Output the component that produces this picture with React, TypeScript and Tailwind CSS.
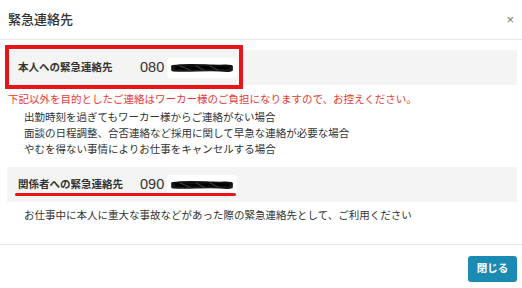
import React from 'react';

const Scribble = () => (
  <span className="inline-flex items-center bg-white rounded-[3px] px-[3px] h-[20px] ml-[3px]">
    <svg width="64" height="12" viewBox="0 0 64 12">
      <g fill="none" strokeLinecap="round" style={{ filter: 'blur(0.4px)' }}>
        <path d="M3 5 C 14 3, 28 4, 42 4.5 S 56 4, 61 5" stroke="#111" strokeWidth="4" />
        <path d="M3 7.5 C 18 8.5, 36 6.5, 50 7.5 S 58 7.5, 61 7.5" stroke="#1a1a1a" strokeWidth="4" />
        <path d="M6 6 C 20 7, 40 5, 58 6" stroke="#000" strokeWidth="3" />
        <path d="M10 4 L 20 8 M 26 4 L 34 8 M 40 4 L 48 8" stroke="#444" strokeWidth="1" />
      </g>
    </svg>
  </span>
);

const ContactRow = ({ label, number }: { label: string; number: string }) => (
  <div className="ml-[7px] mr-[5px] h-[35px] bg-[#f4f4f4] flex items-center pl-[11px]">
    <span className="w-[122px] text-[10.5px] font-bold text-[#333]">{label}</span>
    <span className="text-[14.5px] text-[#333] leading-none">{number}</span>
    <Scribble />
  </div>
);

export default function App() {
  return (
    <div
      className="relative w-[522px] h-[288px] bg-white overflow-hidden"
      style={{ fontFamily: '"Liberation Sans", "Noto Sans CJK JP", sans-serif' }}
    >
      {/* header */}
      <div className="h-[40px] flex items-center justify-between pl-[8px] pr-[8px] border-b border-[#e6e6e6]">
        <h2 className="text-[13px] font-medium text-[#333] leading-none">緊急連絡先</h2>
        <span className="text-[13px] text-[#777] leading-none">×</span>
      </div>

      {/* body */}
      <div className="pt-[10px]">
        <ContactRow label="本人への緊急連絡先" number="080" />

        <p className="mt-[7px] px-[8px] text-[10.5px] leading-[14px] text-[#e53935]">
          下記以外を目的としたご連絡はワーカー様のご負担になりますので、お控えください。
        </p>
        <ul className="mt-[3px] pl-[24px] text-[10.5px] leading-[16px] text-[#333]">
          <li>出勤時刻を過ぎてもワーカー様からご連絡がない場合</li>
          <li>面談の日程調整、合否連絡など採用に関して早急な連絡が必要な場合</li>
          <li>やむを得ない事情によりお仕事をキャンセルする場合</li>
        </ul>

        <div className="mt-[10px]">
          <ContactRow label="関係者への緊急連絡先" number="090" />
        </div>

        <p className="mt-[5px] pl-[24px] text-[10.5px] leading-[16px] text-[#333]">
          お仕事中に本人に重大な事故などがあった際の緊急連絡先として、ご利用ください
        </p>
      </div>

      {/* footer */}
      <div className="mt-[21px] border-t border-[#e6e6e6] pt-[11px] pr-[5px] flex justify-end">
        <button className="h-[26px] w-[49px] rounded-[3px] bg-[#1a8bb3] text-white text-[10.5px] font-bold">
          閉じる
        </button>
      </div>

      {/* annotations */}
      <div className="absolute left-[5px] top-[45px] w-[238px] h-[44px] border-[4px] border-[#e8141c]" />
      <div className="absolute left-[15px] top-[193px] w-[221px] h-[3px] rounded-full bg-[#e8141c]" />
    </div>
  );
}
